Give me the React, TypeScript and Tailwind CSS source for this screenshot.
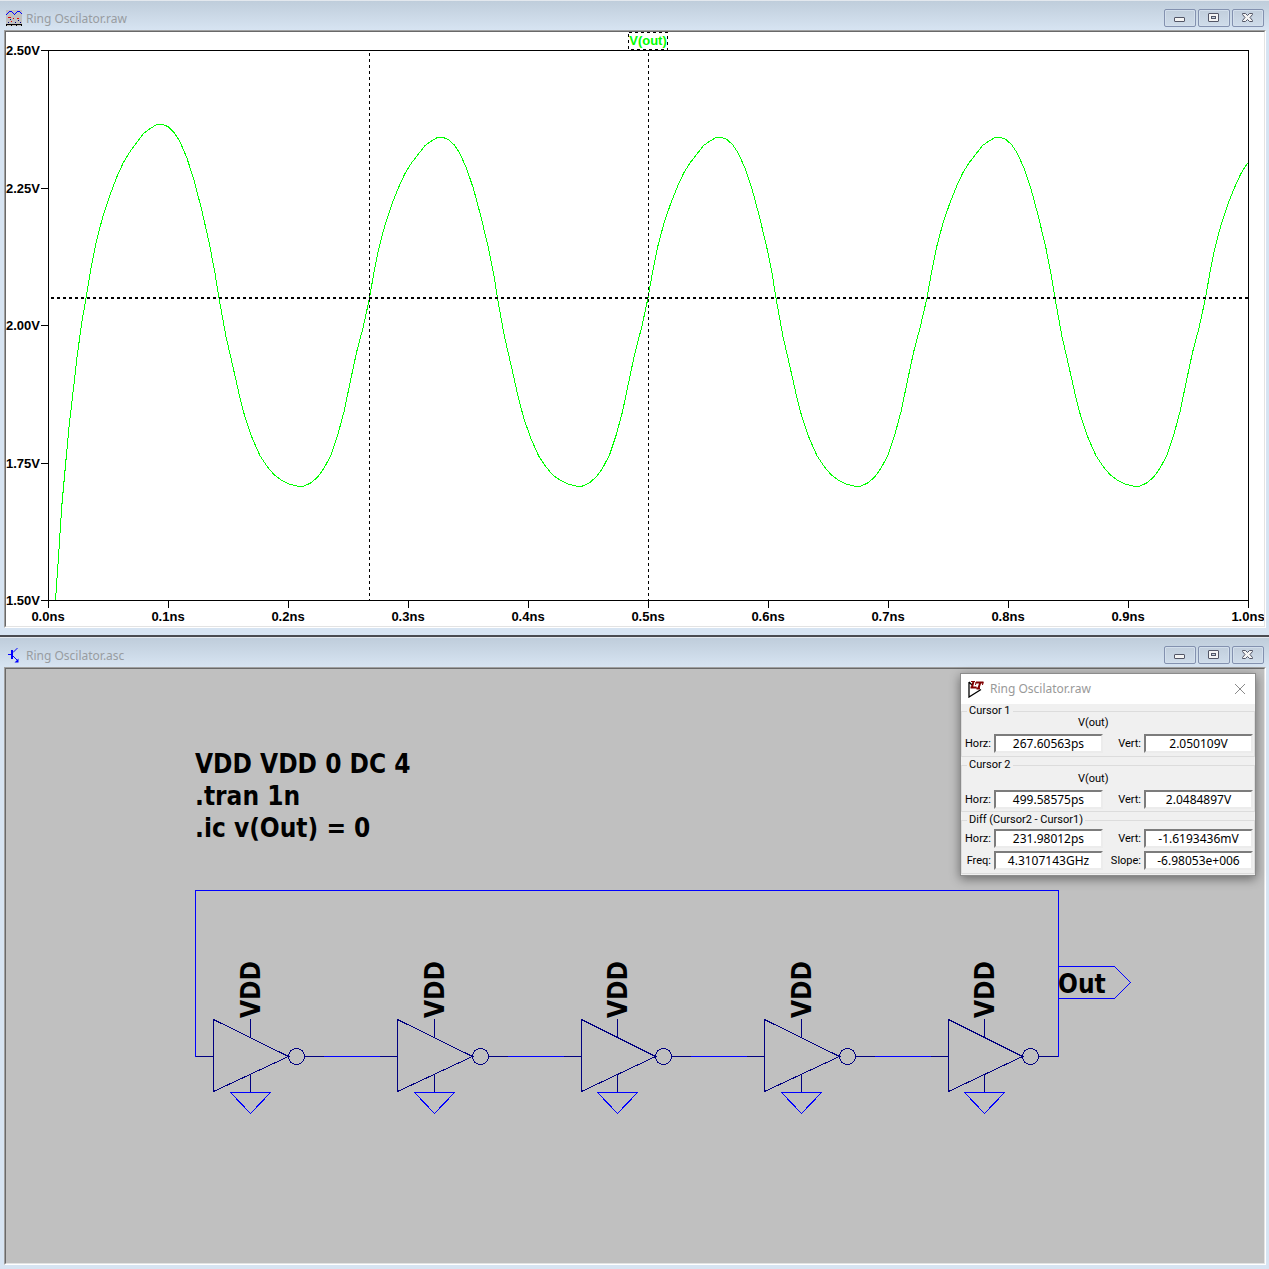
import React from "react";

type Point = [number, number];

const STARTUP: Point[] = [
  [55.5, 600], [58.3, 560], [61.7, 507], [65.7, 463], [69, 427], [73.3, 390], [77.3, 355], [81.7, 323],
];
const RISE: Point[] = [
  [86, 298], [90.7, 270], [96, 243], [102.7, 217], [110, 195], [116.7, 177.3], [123.3, 162.7],
  [130, 151.7], [136.7, 142.7], [144, 133], [150, 128.7], [156.7, 124.5], [160, 124.4],
];
const FALL: Point[] = [
  [162.7, 124.5], [168.3, 126.7], [174.3, 132.7], [180, 141.7], [187, 158.3], [194, 180],
  [201.7, 210], [209.3, 243.3], [215, 273.3],
];
const TROUGH: Point[] = [
  [219, 298.3], [226, 336.7], [233.3, 368.3], [240, 398.3], [245.3, 418.3], [252.3, 438.3],
  [260, 455.7], [267.3, 466.7], [274.3, 475], [281.7, 480.3], [289.3, 484], [298.3, 486.3],
  [303.3, 486.3], [310.7, 483], [317.7, 477], [324, 468.3], [331, 455], [337.7, 435],
  [344, 411.7], [351, 378.3], [356.7, 351.7], [363.3, 326.7],
];

function buildTrace(): string {
  const points: Point[] = [...STARTUP, ...RISE, ...FALL, ...TROUGH];
  for (const start of [369.5, 648, 927, 1205.5]) {
    const lift = (y: number) => 298 - (298 - y) * 0.925;
    RISE.forEach(([x, y]) => points.push([start + (x - 86) * 0.96, lift(y)]));
    FALL.forEach(([x, y]) => points.push([start + 71 + (x - 160) * 0.97, lift(y)]));
    TROUGH.forEach(([x, y]) => points.push([start + x - 91, y]));
  }
  return points
    .filter(([x]) => x <= 1251)
    .map(([x, y]) => `${x.toFixed(1)},${y.toFixed(1)}`)
    .join(" ");
}

const TRACE = buildTrace();
const VOLTS: [string, number][] = [
  ["2.50V", 50], ["2.25V", 188], ["2.00V", 325], ["1.75V", 463], ["1.50V", 600],
];
const TIMES = ["0.0ns", "0.1ns", "0.2ns", "0.3ns", "0.4ns", "0.5ns", "0.6ns", "0.7ns", "0.8ns", "0.9ns", "1.0ns"];

function Plot() {
  return (
    <svg
      viewBox="6 32 1258 594"
      className="block h-auto w-full bg-white font-['Liberation_Sans',Arial,sans-serif] text-[13px] font-bold"
      role="img"
      aria-label="V(out) over time"
    >
      <defs>
        <clipPath id="plot-area">
          <rect x="48" y="50" width="1200" height="550" />
        </clipPath>
      </defs>
      <g shapeRendering="crispEdges" fill="none" stroke="#000">
        <rect x="48.5" y="50.5" width="1200" height="550" />
        {VOLTS.map(([v, y]) => (
          <path key={v} d={`M41 ${y + 0.5}H48`} />
        ))}
        {TIMES.map((t, i) => (
          <path key={t} d={`M${48.5 + i * 120} 600V608`} />
        ))}
        <polyline points={TRACE} stroke="#00ff00" clipPath="url(#plot-area)" />
        <path d="M51 298H1248" strokeWidth="2" strokeDasharray="3 3" />
        <path d="M369.5 53V600M648.5 53V600" strokeDasharray="3 3" />
        <rect x="628.5" y="32.5" width="39" height="17" strokeDasharray="3 3" />
      </g>
      {VOLTS.map(([v, y]) => (
        <text key={v} x="40" y={y + 5} textAnchor="end">{v}</text>
      ))}
      {TIMES.map((t, i) => (
        <text key={t} x={48 + i * 120} y="621" textAnchor="middle">{t}</text>
      ))}
      <text x="648" y="45" textAnchor="middle" fill="#00ff00">V(out)</text>
    </svg>
  );
}

/* Left edge of each inverter body and the x of its supply pins. */
const STAGES: Point[] = [
  [213.5, 250.5], [397.5, 434.5], [581.5, 617.5], [764.5, 801.5], [948.5, 984.5],
];

function Inverter({ x, pin }: { x: number; pin: number }) {
  return (
    <g>
      <g shapeRendering="crispEdges" fill="none" stroke="#000080">
        <path d={`M${x} 1019.5L${pin + 38} 1056.5L${x} 1091.5Z`} />
        <path d={`M${x - 18} 1056.5H${x}M${pin + 54} 1056.5H${pin + 73}`} />
        <path d={`M${pin} 1019V1038M${pin} 1074V1092`} />
        <circle cx={pin + 46} cy="1056.5" r="8" />
        <path d={`M${pin - 20} 1092.5H${pin + 20}L${pin} 1113.5Z`} stroke="#0000ff" />
      </g>
      <text transform={`translate(${pin + 9.5} 1018) rotate(-90)`}>VDD</text>
    </g>
  );
}

function Schematic() {
  return (
    <svg
      viewBox="6 669 1258 594"
      className="block h-auto w-full bg-[#c0c0c0] font-['DejaVu_Sans_Condensed','DejaVu_Sans',sans-serif] text-[26px] font-bold"
      role="img"
      aria-label="Ring oscillator schematic"
    >
      <g shapeRendering="crispEdges" fill="none" stroke="#0000ff">
        <path d="M195.5 1056.5V890.5H1058.5V1056.5" />
        {STAGES.slice(0, 4).map(([x, pin], i) => (
          <path key={x} d={`M${pin + 73} 1056.5H${STAGES[i + 1][0] - 18}`} />
        ))}
        <path d="M1058.5 966.5H1114.5L1130.5 982.5L1114.5 998.5H1058.5" />
      </g>
      {STAGES.map(([x, pin]) => (
        <Inverter key={x} x={x} pin={pin} />
      ))}
      <text x="195" y="773">VDD VDD 0 DC 4</text>
      <text x="195" y="805">.tran 1n</text>
      <text x="195" y="837">.ic v(Out) = 0</text>
      <text x="1058" y="993">Out</text>
    </svg>
  );
}

function WaveIcon() {
  return (
    <svg width="16" height="16" viewBox="0 0 16 16" shapeRendering="crispEdges" fill="none" aria-hidden="true">
      <path d="M0 0H16V16H0Z" fill="#c0c0c0" />
      <path d="M0 4.5H1M1 3.5H2M2 2.5H3M3 1.5H6M6 2.5H7M7 3.5H8M8 4.5H9M9 3.5H10M10 2.5H11M11 1.5H14M14 2.5H15M15 3.5H16" stroke="#0000ff" />
      <path d="M2 7.5H5M7 8.5H8M11 8.5H13M5 11.5H6" stroke="#e00000" />
      <path d="M4 9.5H5M12 10.5H13M2 12.5H3M9 12.5H10M14 12.5H15" stroke="#000080" />
      <path d="M0 14.5H16M0 15.5H1M5 15.5H6M10 15.5H11M15 15.5H16" stroke="#000" />
    </svg>
  );
}

function TransistorIcon() {
  return (
    <svg width="16" height="16" viewBox="0 0 16 16" fill="none" stroke="#0000ff" aria-hidden="true">
      <path d="M2 7.5H5" />
      <path d="M6 3V12" strokeWidth="2" />
      <path d="M7 5.5L11.5 1M7 9L12 14" />
      <path d="M12.5 15.5V11.5L8.5 15.5Z" fill="#0000ff" stroke="none" />
    </svg>
  );
}

function LogoIcon() {
  return (
    <svg width="16" height="17" viewBox="0 0 16 17" fill="none" aria-hidden="true">
      <path d="M1 1V16L13 8.5M1 1L4 4" stroke="#000" strokeWidth="1.3" />
      <path d="M5.5 0.5L4 6M2.5 6.5H8.5M8 1.5H15.5M12.5 1L10.5 7M8.5 7.5H12" stroke="#800000" strokeWidth="2" />
      <path d="M3 0.5H7M15 1L14.5 4M8 1L7.5 4" stroke="#800000" />
    </svg>
  );
}

type Glyph = "Minimize" | "Restore" | "Close";

function ControlButton({ kind }: { kind: Glyph }) {
  return (
    <button
      type="button"
      aria-label={kind}
      className="flex h-[18px] w-8 items-center justify-center rounded-[2px] border border-[#8391af] bg-linear-to-b from-[#c1cedc] to-[#cfdcea] shadow-[inset_0_0_0_1px_#d3dfec]"
    >
      <svg width="12" height="10" viewBox="0 0 12 10" fill="#f4f4f4" stroke="#535666" aria-hidden="true">
        {kind === "Minimize" && <rect x="0.5" y="4.5" width="10" height="4" rx="0.5" />}
        {kind === "Restore" && (
          <>
            <rect x="0.5" y="0.5" width="10" height="8" rx="0.5" />
            <rect x="3.5" y="3.5" width="4" height="2" fill="#c7d4e2" />
          </>
        )}
        {kind === "Close" && (
          <path d="M0.5 0.5H3.5L5.5 2.5L7.5 0.5H10.5V1.5L8 4.5L10.5 7.5V8.5H7.5L5.5 6.5L3.5 8.5H0.5V7.5L3 4.5L0.5 1.5Z" />
        )}
      </svg>
    </button>
  );
}

function TitleBar({ title, icon }: { title: string; icon: React.ReactNode }) {
  return (
    <header className="flex h-[30px] items-end gap-1 border-t border-[#e3e8ee] bg-linear-to-b from-[#bfcddb] to-[#d7e4f2] pr-[5px] pb-[3px] pl-1.5">
      <div className="pb-px">{icon}</div>
      <h2 className="flex-1 text-xs leading-4 text-[#989ca1]">{title}</h2>
      <div className="flex gap-0.5">
        <ControlButton kind="Minimize" />
        <ControlButton kind="Restore" />
        <ControlButton kind="Close" />
      </div>
    </header>
  );
}

function Pane({ children }: { children: React.ReactNode }) {
  return (
    <div className="relative mr-[3px] ml-1 border border-t-[#a0a0a0] border-r-white border-b-white border-l-[#a0a0a0]">
      <div className="border border-t-[#696969] border-r-[#e3e3e3] border-b-[#e3e3e3] border-l-[#696969]">
        {children}
      </div>
    </div>
  );
}

function Field({ id, label, value }: { id: string; label: string; value: string }) {
  return (
    <>
      <label htmlFor={id} className="text-right">{label}</label>
      <input
        id={id}
        readOnly
        value={value}
        className="h-[19px] w-full min-w-0 border-2 border-t-[#7c7c7c] border-r-[#ececec] border-b-[#ececec] border-l-[#7c7c7c] bg-white text-center font-['Noto_Sans',sans-serif] text-xs leading-[15px] outline-none"
      />
    </>
  );
}

function Row({ children }: { children: React.ReactNode }) {
  return <div className="grid grid-cols-[28px_1fr_35px_1fr] items-center gap-x-[3px]">{children}</div>;
}

function CursorDialog() {
  return (
    <section
      aria-label="Cursor readout"
      className="absolute top-[5px] right-[9px] w-[296px] border border-[#8c8c8c] bg-[#f0f0f0] shadow-[0_3px_10px_rgba(0,0,0,0.45)]"
    >
      <header className="flex h-[30px] items-center bg-white pr-[9px] pl-[7px]">
        <LogoIcon />
        <h3 className="flex-1 pl-1.5 text-xs leading-4 text-[#999]">Ring Oscilator.raw</h3>
        <button type="button" aria-label="Close">
          <svg width="12" height="12" viewBox="0 0 12 12" stroke="#8a8a8a" aria-hidden="true">
            <path d="M1 1L11 11M11 1L1 11" />
          </svg>
        </button>
      </header>
      <div className="flex flex-col gap-0.5 pt-px pb-px font-['Roboto','Liberation_Sans',sans-serif] text-[11px] leading-3">
        <fieldset className="border border-[#dcdcdc] px-px pb-[3px]">
          <legend className="ml-1 px-0.5">Cursor 1</legend>
          <p className="mb-[5px] pl-[115px]">V(out)</p>
          <Row>
            <Field id="c1h" label="Horz:" value="267.60563ps" />
            <Field id="c1v" label="Vert:" value="2.050109V" />
          </Row>
        </fieldset>
        <fieldset className="border border-[#dcdcdc] px-px pb-0.5">
          <legend className="ml-1 px-0.5">Cursor 2</legend>
          <p className="mt-0.5 mb-[5px] pl-[115px]">V(out)</p>
          <Row>
            <Field id="c2h" label="Horz:" value="499.58575ps" />
            <Field id="c2v" label="Vert:" value="2.0484897V" />
          </Row>
        </fieldset>
        <fieldset className="border border-[#dcdcdc] px-px pb-[3px]">
          <legend className="ml-1 px-0.5">Diff (Cursor2 - Cursor1)</legend>
          <div className="flex flex-col gap-[3px] pt-[3px]">
            <Row>
              <Field id="dh" label="Horz:" value="231.98012ps" />
              <Field id="dv" label="Vert:" value="-1.6193436mV" />
            </Row>
            <Row>
              <Field id="df" label="Freq:" value="4.3107143GHz" />
              <Field id="ds" label="Slope:" value="-6.98053e+006" />
            </Row>
          </div>
        </fieldset>
      </div>
    </section>
  );
}

export default function App() {
  return (
    <main className="min-h-screen bg-[#d7e4f2] font-['Noto_Sans',sans-serif] text-black">
      <section aria-label="Waveform window" className="border-b-2 border-[#4a4b50] pb-[7px]">
        <TitleBar title="Ring Oscilator.raw" icon={<WaveIcon />} />
        <Pane>
          <Plot />
        </Pane>
      </section>
      <section aria-label="Schematic window" className="pb-1">
        <TitleBar title="Ring Oscilator.asc" icon={<TransistorIcon />} />
        <Pane>
          <Schematic />
          <CursorDialog />
        </Pane>
      </section>
    </main>
  );
}
